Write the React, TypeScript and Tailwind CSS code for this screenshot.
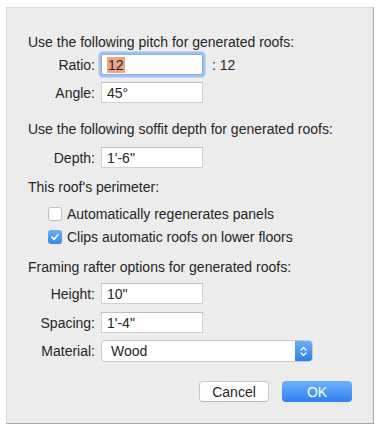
import React from "react";

const font = { fontFamily: '"Liberation Sans", Arial, sans-serif' };

function Field({ label, value, focused, mt, suffix }: { label: string; value: string; focused?: boolean; mt: string; suffix?: string }) {
  return (
    <div className={`flex items-center h-[21px] ${mt}`}>
      <div className="w-[67px] text-right text-[14px] text-[#262626] leading-none whitespace-nowrap">{label}</div>
      <div
        className={`ml-[6px] w-[102px] h-[21px] bg-white flex items-center pl-[5px] text-[14px] text-[#262626] leading-none ${
          focused
            ? "border border-[#8cb0e0] shadow-[0_0_0_2.5px_#9ec0ee] rounded-[2px]"
            : "border border-[#cfcfcf] border-t-[#bdbdbd]"
        }`}
      >
        {focused ? <span className="bg-[#f0a487] px-[1px] leading-[16px]">{value}</span> : <span>{value}</span>}
      </div>
      {suffix && <div className="ml-[9px] text-[14px] text-[#262626] leading-none">{suffix}</div>}
    </div>
  );
}

function Checkbox({ checked, label, mt }: { checked?: boolean; label: string; mt: string }) {
  return (
    <div className={`flex items-center h-[16px] ${mt}`}>
      <div className="ml-[20px] w-[14px] h-[14px] rounded-[3px] flex items-center justify-center shrink-0">
        {checked ? (
          <div className="w-[14px] h-[14px] rounded-[3px] bg-gradient-to-b from-[#6aaef7] to-[#3a86ee] flex items-center justify-center">
            <svg width="10" height="10" viewBox="0 0 10 10">
              <path d="M2 5.2 L4.1 7.4 L8 2.6" fill="none" stroke="white" strokeWidth="1.6" strokeLinecap="round" strokeLinejoin="round" />
            </svg>
          </div>
        ) : (
          <div className="w-[14px] h-[14px] rounded-[3px] bg-white border border-[#bdbdbd]" />
        )}
      </div>
      <div className="ml-[5px] text-[14px] text-[#262626] leading-none">{label}</div>
    </div>
  );
}

export default function App() {
  return (
    <div className="w-[382px] h-[430px] bg-white pt-[7px] pl-[6px]" style={font}>
      <div className="w-[368px] h-[417px] bg-[#ececec] border-l border-t border-[#dadada] border-r-[#a8a8a8] border-b-[#a8a8a8] border-r border-b pl-[21px] pt-[26px] flex flex-col">
        <div className="h-[16px] text-[14px] text-[#262626] leading-[16px]">Use the following pitch for generated roofs:</div>
        <Field label="Ratio:" value="12" focused mt="mt-[4px]" suffix=": 12" />
        <Field label="Angle:" value="45°" mt="mt-[7px]" />
        <div className="mt-[18px] h-[16px] text-[14px] text-[#262626] leading-[16px]">Use the following soffit depth for generated roofs:</div>
        <Field label="Depth:" value={"1'-6\""} mt="mt-[10px]" />
        <div className="mt-[11px] h-[16px] text-[14px] text-[#262626] leading-[16px]">This roof's perimeter:</div>
        <Checkbox label="Automatically regenerates panels" mt="mt-[11px]" />
        <Checkbox checked label="Clips automatic roofs on lower floors" mt="mt-[7px]" />
        <div className="mt-[14px] h-[16px] text-[14px] text-[#262626] leading-[16px]">Framing rafter options for generated roofs:</div>
        <Field label="Height:" value={'10"'} mt="mt-[8px]" />
        <Field label="Spacing:" value={"1'-4\""} mt="mt-[8px]" />
        <div className="flex items-center h-[22px] mt-[7px]">
          <div className="w-[67px] text-right text-[14px] text-[#262626] leading-none">Material:</div>
          <div className="ml-[6px] w-[212px] h-[22px] bg-white border border-[#c9c9c9] rounded-[4px] flex items-center overflow-hidden">
            <div className="flex-1 pl-[9px] text-[14px] text-[#262626] leading-none">Wood</div>
            <div className="w-[17px] h-full bg-gradient-to-b from-[#69aef8] to-[#2f7ee9] flex items-center justify-center">
              <svg width="9" height="13" viewBox="0 0 9 13">
                <path d="M2 5 L4.5 2.5 L7 5" fill="none" stroke="white" strokeWidth="1.3" strokeLinecap="round" strokeLinejoin="round" />
                <path d="M2 8 L4.5 10.5 L7 8" fill="none" stroke="white" strokeWidth="1.3" strokeLinecap="round" strokeLinejoin="round" />
              </svg>
            </div>
          </div>
        </div>
        <div className="flex mt-[19px] pl-[171px]">
          <div className="w-[70px] h-[21px] bg-white border border-[#c8c8c8] border-b-[#b4b4b4] rounded-[4px] flex items-center justify-center text-[14px] text-[#262626] leading-none">Cancel</div>
          <div className="ml-[13px] w-[70px] h-[21px] rounded-[4px] bg-gradient-to-b from-[#6db2fb] to-[#2f7ff0] flex items-center justify-center text-[14px] text-white leading-none">OK</div>
        </div>
      </div>
    </div>
  );
}
